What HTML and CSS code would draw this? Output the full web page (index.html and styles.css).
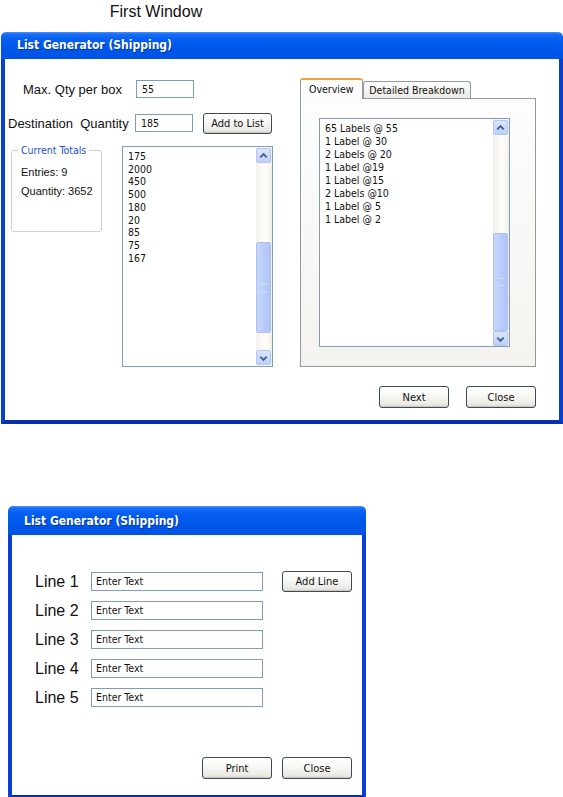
FILE: index.html
```html
<!DOCTYPE html>
<html>
<head>
<meta charset="utf-8">
<link rel="stylesheet" href="styles.css">
</head>
<body>
<div class="caption">First Window</div>

<div class="window win1">
  <div class="titlebar">List Generator (Shipping)</div>
  <div class="wbody">
    <div class="main">
      <div class="left">
        <div class="row row-max">
          <span class="lbl lbl-max">Max. Qty per box</span>
          <div class="input">55</div>
        </div>
        <div class="row row-dest">
          <span class="lbl lbl-dest">Destination  Quantity</span>
          <div class="input">185</div>
          <button class="btn btn-add">Add to List</button>
        </div>
        <div class="row row-lists">
          <div class="group">
            <span class="legend">Current Totals</span>
            <div class="gline gfirst">Entries: 9</div>
            <div class="gline">Quantity: 3652</div>
          </div>
          <div class="listbox lb1">
            <ul class="items">
              <li>175</li><li>2000</li><li>450</li><li>500</li><li>180</li><li>20</li><li>85</li><li>75</li><li>167</li>
            </ul>
            <div class="scroll">
              <div class="arrow"><svg width="14" height="14" viewBox="0 0 14 14"><polyline points="3.5,8.5 7,5 10.5,8.5" fill="none" stroke="#4a5f86" stroke-width="2"/></svg></div>
              <div class="track"><div class="thumb" style="margin-top:79px;height:91px"><span class="grip"></span></div></div>
              <div class="arrow"><svg width="14" height="14" viewBox="0 0 14 14"><polyline points="3.5,5.5 7,9 10.5,5.5" fill="none" stroke="#4a5f86" stroke-width="2"/></svg></div>
            </div>
          </div>
        </div>
      </div>
      <div class="right">
        <div class="tabs">
          <div class="tab active">Overview</div>
          <div class="tab">Detailed Breakdown</div>
        </div>
        <div class="panel">
          <div class="listbox lb2">
            <ul class="items">
              <li>65 Labels @ 55</li><li>1 Label @ 30</li><li>2 Labels @ 20</li><li>1 Label @19</li><li>1 Label @15</li><li>2 Labels @10</li><li>1 Label @ 5</li><li>1 Label @ 2</li>
            </ul>
            <div class="scroll">
              <div class="arrow"><svg width="14" height="14" viewBox="0 0 14 14"><polyline points="3.5,8.5 7,5 10.5,8.5" fill="none" stroke="#4a5f86" stroke-width="2"/></svg></div>
              <div class="track"><div class="thumb" style="margin-top:98px;height:98px"><span class="grip"></span></div></div>
              <div class="arrow"><svg width="14" height="14" viewBox="0 0 14 14"><polyline points="3.5,5.5 7,9 10.5,5.5" fill="none" stroke="#4a5f86" stroke-width="2"/></svg></div>
            </div>
          </div>
        </div>
      </div>
    </div>
    <div class="footer">
      <button class="btn">Next</button>
      <button class="btn">Close</button>
    </div>
  </div>
</div>

<div class="window win2">
  <div class="titlebar">List Generator (Shipping)</div>
  <div class="wbody">
    <div class="lines">
      <div class="line"><span class="linelbl">Line 1</span><div class="input wide">Enter Text</div><button class="btn btn-addline">Add Line</button></div>
      <div class="line"><span class="linelbl">Line 2</span><div class="input wide">Enter Text</div></div>
      <div class="line"><span class="linelbl">Line 3</span><div class="input wide">Enter Text</div></div>
      <div class="line"><span class="linelbl">Line 4</span><div class="input wide">Enter Text</div></div>
      <div class="line"><span class="linelbl">Line 5</span><div class="input wide">Enter Text</div></div>
    </div>
    <div class="footer footer2">
      <button class="btn">Print</button>
      <button class="btn">Close</button>
    </div>
  </div>
</div>
</body>
</html>
```

FILE: styles.css
```css
* { box-sizing: border-box; }
html, body { margin: 0; padding: 0; background: #fff; }
body {
  font-family: "Liberation Sans", Arial, sans-serif;
  color: #111;
  width: 563px;
  height: 797px;
  overflow: hidden;
}
.caption {
  width: 312px;
  text-align: center;
  font-size: 16px;
  line-height: 18px;
  padding-top: 3px;
  height: 32px;
  color: #111;
}

.window {
  display: flex;
  flex-direction: column;
}
.win1 { margin-left: 1px; width: 562px; }
.win2 { margin-left: 8px; width: 358px; margin-top: 82px; }

.titlebar {
  height: 27px;
  border-radius: 5px 5px 0 0;
  background: linear-gradient(#4a96fb 0, #1a6ef5 2px, #0a62f2 6px, #0058ec 50%, #0053e4 100%);
  color: #fff;
  font-family: "DejaVu Sans", sans-serif;
  font-weight: bold;
  font-stretch: condensed;
  font-size: 12px;
  line-height: 27px;
  padding-left: 16px;
  text-shadow: 1px 1px 0 rgba(0, 20, 90, 0.5);
}
.win2 .titlebar { height: 29px; line-height: 30px; padding-left: 16px; }

.wbody {
  background: #fff;
  border: 4px solid #0a3fd6;
  border-top: none;
  border-bottom-color: #0a2fae;
}
.win1 .wbody {
  padding: 19px 23px 12px 1px;
  display: flex;
  flex-direction: column;
}

.main { display: flex; align-items: flex-start; }
.left { display: flex; flex-direction: column; padding-top: 2px; width: 267px; }
.right { margin-left: 27px; display: flex; flex-direction: column; }

.row { display: flex; align-items: center; }
.lbl { font-size: 13px; white-space: pre; }
.lbl-max { padding-left: 17px; width: 130px; }
.lbl-dest { padding-left: 2px; width: 129px; }
.row-dest { margin-top: 15px; }
.row-dest .input { margin-top: -2px; }

.input {
  width: 58px;
  height: 18px;
  border: 1px solid #7f9db9;
  background: #fff;
  font-family: "DejaVu Sans", sans-serif;
  font-stretch: condensed;
  font-size: 10.5px;
  line-height: 16px;
  padding-left: 5px;
  color: #111;
}

.btn {
  font-family: "DejaVu Sans", sans-serif;
  font-stretch: condensed;
  font-size: 11px;
  color: #111;
  height: 22px;
  padding: 0;
  border: 1px solid #3b4a5c;
  border-radius: 3px;
  background: linear-gradient(#ffffff 0%, #f7f7f4 45%, #ebeae4 85%, #d6d3c8 100%);
  box-shadow: inset 0 -1px 0 #cdcac0;
}
.btn-add { width: 69px; height: 21px; margin-left: 10px; }

.row-lists { margin-top: 12px; align-items: flex-start; }
.group {
  margin-top: 4px;
  margin-left: 5px;
  width: 91px;
  height: 82px;
  border: 1px solid #d0d0c4;
  border-radius: 3px;
  font-size: 11px;
}
.legend {
  display: table;
  margin: -7px 0 0 6px;
  padding: 0 3px;
  background: #fff;
  color: #1f4ed6;
  font-family: "DejaVu Sans", sans-serif;
  font-stretch: condensed;
  font-size: 10.5px;
  line-height: 12px;
}
.gline { padding-left: 9px; line-height: 19px; }
.gfirst { margin-top: 7px; }

.listbox {
  display: flex;
  border: 1px solid #7f9db9;
  background: #fff;
}
.lb1 { margin-left: 20px; width: 151px; height: 221px; }
.items {
  flex: 1;
  list-style: none;
  margin: 0;
  padding: 3px 0 0 5px;
  font-family: "DejaVu Sans", sans-serif;
  font-stretch: condensed;
  font-size: 10.5px;
  line-height: 12.7px;
  color: #111;
}
.lb2 .items { padding-top: 3px; line-height: 13px; }

.scroll {
  width: 16px;
  display: flex;
  flex-direction: column;
  padding: 1px 1px 1px 0;
  background: linear-gradient(90deg, #f3f1ec, #fefefb 60%, #f1efe8);
}
.arrow {
  width: 15px;
  height: 15px;
  border: 1px solid #b3c6f2;
  border-radius: 2px;
  background: linear-gradient(#d9e5fd, #bdd0fa);
  display: flex;
  align-items: center;
  justify-content: center;
}
.arrow svg { display: block; }
.track { flex: 1; display: flex; flex-direction: column; }
.thumb {
  width: 15px;
  border: 1px solid #aebff0;
  border-radius: 2px;
  background: linear-gradient(90deg, #c8d7fb, #b8cbf9 60%, #aec3f6);
  display: flex;
  align-items: center;
  justify-content: center;
}
.grip { width: 6px; height: 8px; border-top: 1px solid #d6e1fb; border-bottom: 1px solid #d6e1fb; }

.tabs { display: flex; align-items: flex-end; height: 20px; position: relative; z-index: 1; }
.tab {
  font-family: "DejaVu Sans", sans-serif;
  font-stretch: condensed;
  font-size: 10.5px;
  color: #111;
  border: 1px solid #919b9c;
  border-bottom: none;
  border-radius: 3px 3px 0 0;
  height: 17px;
  line-height: 16px;
  padding: 0 7px;
  background: linear-gradient(#fefefe, #ecebe5);
}
.tab.active {
  height: 21px;
  width: 63px;
  padding: 0 8px;
  line-height: 19px;
  background: #fcfcfe;
  border-top: 2px solid #f2a536;
  margin-bottom: -1px;
}
.tab + .tab { width: 108px; text-align: center; padding: 0; }

.panel {
  width: 236px;
  height: 269px;
  border: 1px solid #919b9c;
  background: linear-gradient(#fdfdfe, #f4f3ef);
  padding: 19px 0 0 18px;
}
.lb2 { width: 191px; height: 229px; }

.footer {
  display: flex;
  justify-content: flex-end;
  gap: 17px;
  margin-top: 19px;
}
.footer .btn { width: 70px; height: 22px; font-size: 11px; }

.win2 .wbody {
  height: 264px;
  padding: 36px 10px 16px 23px;
  display: flex;
  flex-direction: column;
}
.lines { display: flex; flex-direction: column; gap: 8px; }
.line { display: flex; align-items: center; height: 21px; }
.linelbl { font-size: 16px; width: 56px; }
.input.wide { width: 172px; height: 19px; line-height: 17px; padding-left: 4px; }
.btn-addline { margin-left: 19px; width: 70px; height: 21px; }
.footer2 { margin-top: auto; gap: 10px; }
.footer2 .btn { width: 70px; height: 22px; }
```
